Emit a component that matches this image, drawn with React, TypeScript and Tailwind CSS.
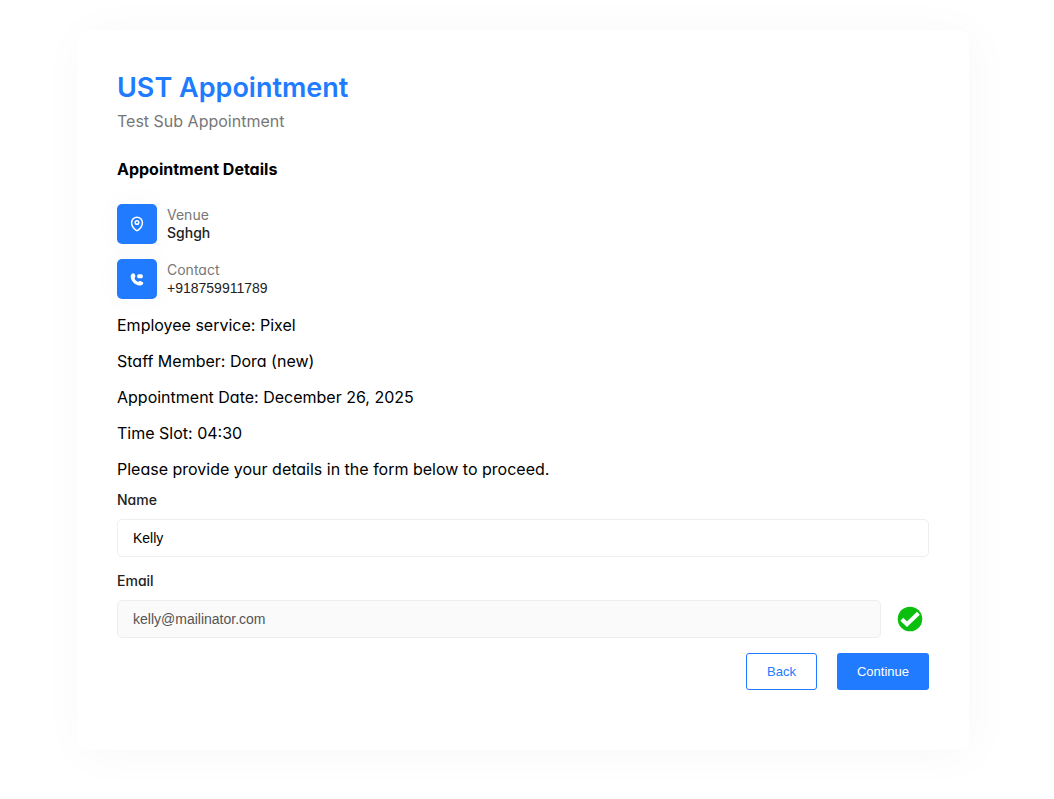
import React from "react";

function PinIcon() {
  return (
    <svg viewBox="0 0 14 16" className="h-4 w-3.5" fill="none" stroke="#fff" strokeWidth="1.5" aria-hidden="true">
      <path d="M7 1.200c3 0 5.400 2.300 5.400 5.200 0 3.300-2.400 6.300-4.300 7.800-.7.500-1.500.5-2.200 0C4 12.700 1.600 9.700 1.600 6.400 1.600 3.500 4 1.200 7 1.200z" />
      <circle cx="7" cy="6.500" r="1.800" />
    </svg>
  );
}

function PhoneIcon() {
  return (
    <svg viewBox="0 0 14 14" className="h-3.5 w-3.5" fill="#fff" aria-hidden="true">
      <path d="M1.700 1.900C2.600.9 4 1 4.600 2.100l.6 1.200c.4.800.2 1.500-.3 2.200-.5.700-.3 1.400.3 2.200.4.600.8 1 1.400 1.400.8.600 1.500.7 2.200.3.700-.5 1.400-.6 2.200-.2l1.400.7c1.100.6 1.200 1.800.2 2.700-1 .9-2.200 1.100-3.700.8C5 12.700 1.400 9.200.8 5.400.6 3.900.8 2.800 1.700 1.900z" />
      <rect x="7.200" y="2.200" width="5.600" height="4" rx="1.500" />
    </svg>
  );
}

function VerifiedIcon() {
  return (
    <svg viewBox="0 0 26 26" className="h-[26px] w-[26px]" role="img" aria-label="Verified">
      <circle cx="13" cy="13" r="12.300" fill="#0abf0e" />
      <path d="M4.800 13.200l5.200 5.100L21.400 7.200" fill="none" stroke="#fff" strokeWidth="4" />
    </svg>
  );
}

function Detail({ icon, label, children }: { icon: React.ReactNode; label: string; children: React.ReactNode }) {
  return (
    <div className="flex items-center gap-2.5">
      <div className="flex size-10 shrink-0 items-center justify-center rounded-[5px] bg-[#207bff] shadow-[0_0_30px_rgba(0,0,0,0.03)]">
        {icon}
      </div>
      <div className="text-sm leading-[18px]">
        <p className="text-[#777]">{label}</p>
        {children}
      </div>
    </div>
  );
}

const summary = [
  "Employee service: Pixel",
  "Staff Member: Dora (new)",
  "Appointment Date: December 26, 2025",
  "Time Slot: 04:30",
  "Please provide your details in the form below to proceed.",
];

export default function App() {
  return (
    <div className="py-[30px] pr-[85px] pl-[77px] font-[Inter,sans-serif] text-black [font-feature-settings:'cv11']">
      <main className="rounded-[10px] bg-white px-10 pt-10 pb-[60px] shadow-[4px_4px_50px_rgba(0,0,0,0.03)]">
        <h1 className="text-[27px] leading-9 font-semibold text-[#207bff]">UST Appointment</h1>
        <p className="mt-[3px] text-base text-[#777]">Test Sub Appointment</p>
        <h2 className="mt-6 text-base font-bold">Appointment Details</h2>
        <div className="mt-[23px] flex flex-col gap-[15px]">
          <Detail icon={<PinIcon />} label="Venue">
            <p className="font-medium text-[#222]">Sghgh</p>
          </Detail>
          <Detail icon={<PhoneIcon />} label="Contact">
            <p className="font-['Liberation_Sans',sans-serif] text-[#222]">+918759911789</p>
          </Detail>
        </div>
        <div className="mt-3.5 flex flex-col gap-3 text-base">
          {summary.map((line) => (
            <p key={line}>{line}</p>
          ))}
        </div>
        <form className="mt-[9px]" onSubmit={(e) => e.preventDefault()}>
          <label htmlFor="name" className="block text-sm font-medium text-[#222]">Name</label>
          <input
            id="name"
            defaultValue="Kelly"
            className="mt-[9px] block h-[38px] w-full rounded-[5px] border border-[#eee] bg-white px-[15px] font-['Liberation_Sans',sans-serif] text-sm text-black"
          />
          <label htmlFor="email" className="mt-3.5 block text-sm font-medium text-[#222]">Email</label>
          <div className="mt-[9px] flex items-center gap-4 pr-1.5">
            <input
              id="email"
              type="email"
              disabled
              defaultValue="kelly@mailinator.com"
              className="h-[38px] min-w-0 flex-1 rounded-[5px] border border-[#eee] bg-[#fafafa] px-[15px] font-['Liberation_Sans',sans-serif] text-sm text-[#545454]"
            />
            <VerifiedIcon />
          </div>
          <div className="mt-[15px] flex justify-end gap-5 font-['Liberation_Sans',sans-serif] text-[13px]">
            <button type="button" className="h-[37px] rounded-[3px] border border-[#207bff] bg-white px-5 text-[#207bff]">Back</button>
            <button type="submit" className="h-[37px] rounded-[3px] bg-[#207bff] px-5 text-white">Continue</button>
          </div>
        </form>
      </main>
    </div>
  );
}
